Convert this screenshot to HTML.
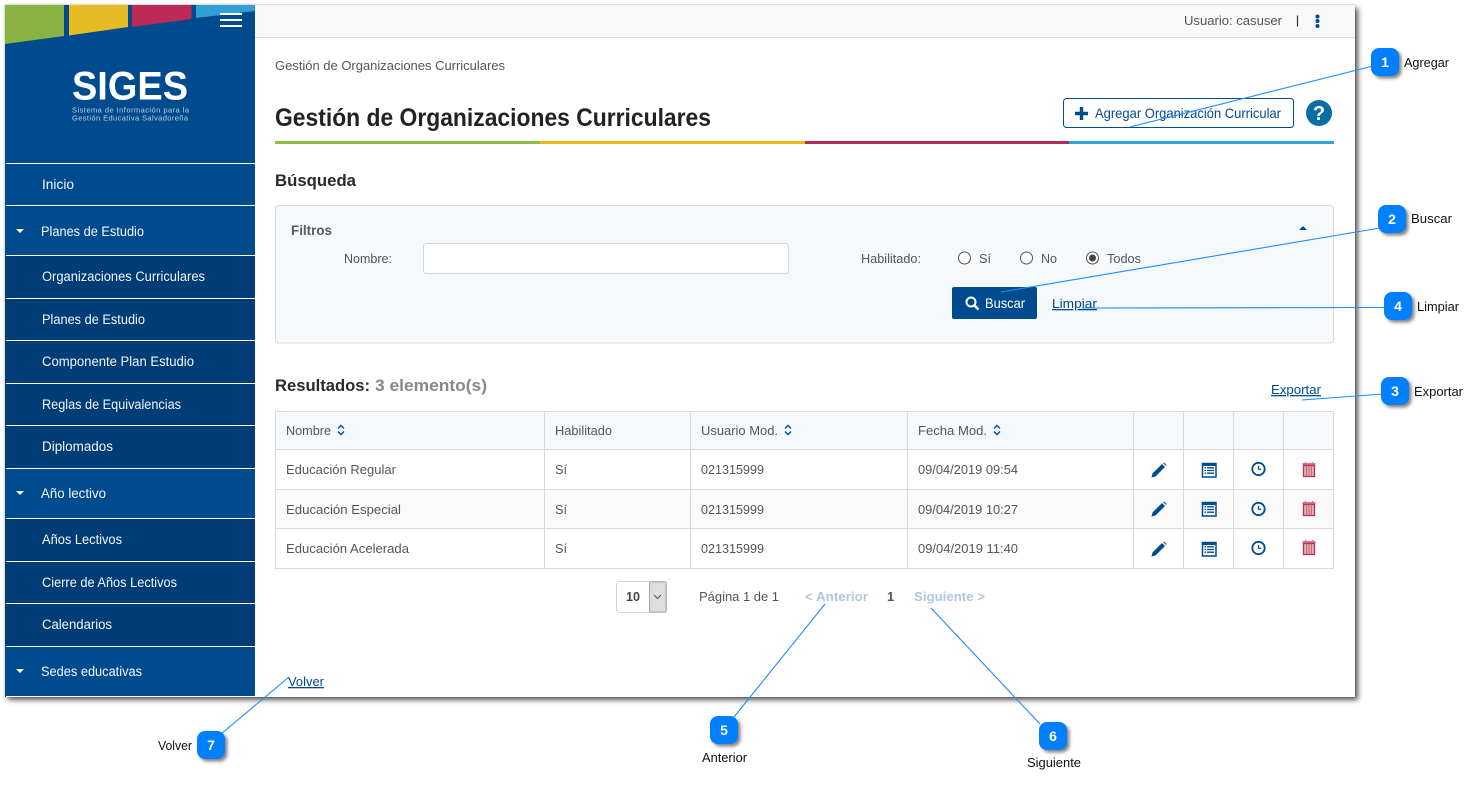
<!DOCTYPE html>
<html lang="es"><head><meta charset="utf-8"><title>SIGES</title>
<style>
html,body{margin:0;padding:0;background:#fff;width:1479px;height:786px;overflow:hidden}
#f{position:absolute;left:5px;top:5px;width:1350px;height:692px;background:#fff;box-shadow:3px 3px 5px rgba(0,0,0,.65),0 0 2px rgba(0,0,0,.25)}
svg{position:absolute;left:0;top:0}
text{font-family:"Liberation Sans",sans-serif;font-size:13px;fill:#555}
.m{font-size:13.5px;fill:#f2f6fa}
.b{font-weight:bold}
.l{fill:#004b8d}
.k{fill:#111;font-size:13px}
.n{font-weight:bold;fill:#fff;font-size:14px;text-anchor:middle}
.p{font-weight:bold;fill:#afc6e0}
</style></head><body><div id="f"></div>
<svg width="1479" height="786" viewBox="0 0 1479 786" xmlns="http://www.w3.org/2000/svg">
<defs>
<g id="ipen"><path d="M-7 7.500l1-4L3.500-6l3 3L-3 6.500z" fill="#004b8d"/><path d="M4.500-7l1-.5 2.500 2.500-.5 1z" fill="#004b8d"/></g>
<g id="ilist"><rect x="-6.500" y="-6.500" width="13.500" height="13.500" fill="#fff" stroke="#004b8d" stroke-width="1.500"/><rect x="-6" y="-6" width="12.500" height="2" fill="#004b8d"/><path d="M-4.500-2.200h1.500M-2-2.200h7M-4.500.500h1.500M-2 .500h7M-4.500 3.200h1.500M-2 3.200h7" stroke="#004b8d" stroke-width="1.300" fill="none"/></g>
<g id="iclock"><circle cx="0" cy="-.5" r="6.200" fill="none" stroke="#004b8d" stroke-width="1.800"/><path d="M0-3.500v3.300h2.800" stroke="#004b8d" stroke-width="1.200" fill="none"/></g>
<g id="itrash"><path d="M-6.500-6h13M-3.500-7v-.8M3.500-7v-.8" stroke="#c02a58" stroke-width="1.200" fill="none"/><rect x="-5.500" y="-4.500" width="11" height="11" fill="#e0b4a8" stroke="#c02a58" stroke-width="1.300"/><path d="M-2.400-4.500v11M0-4.500v11M2.400-4.500v11" stroke="#c8607a" stroke-width="1"/></g>
<g id="isort"><path d="M-3-1.500L0-4.500l3 3M-3 1.500L0 4.500l3-3" fill="none" stroke="#004b8d" stroke-width="1.400"/></g>
<g id="icall"><rect x="-14" y="-14" width="28" height="28" rx="8" fill="#333" opacity=".6" transform="translate(2.500 2.500)" filter="url(#bl)"/><rect x="-14" y="-14" width="28" height="28" rx="8" fill="#007fff"/></g>
<filter id="bl" x="-30%" y="-30%" width="160%" height="160%"><feGaussianBlur stdDeviation="1.500"/></filter>
</defs>

<!-- sidebar -->
<rect x="5" y="5" width="250" height="692" fill="#004b8d"/>
<polygon points="5,5 64,5 64,36 5,44" fill="#8bb244"/>
<polygon points="69,5 128,5 128,27 69,35.500" fill="#e6bc25"/>
<polygon points="132,5 191.500,5 191.500,19 132,27" fill="#bd2a58"/>
<polygon points="196,5 255,5 255,11 196,18" fill="#309fd3"/>
<path d="M220 14h22M220 20h22M220 26h22" stroke="#fff" stroke-width="2"/>
<text x="72" y="99.500" textLength="116" lengthAdjust="spacingAndGlyphs" style="font-size:40px;font-weight:bold;fill:#fff">SIGES</text>
<text x="72" y="112.500" textLength="117" lengthAdjust="spacing" style="font-size:7.500px;fill:#bcd0e2">Sistema de Información para la</text>
<text x="72" y="120.500" textLength="116" lengthAdjust="spacing" style="font-size:7.500px;fill:#bcd0e2">Gestión Educativa Salvadoreña</text>

<rect x="5" y="256" width="250" height="212" fill="#003c75"/>
<rect x="5" y="519" width="250" height="127" fill="#003c75"/>
<path d="M6 163.500h249M6 205.500h249M6 255.500h249M6 298.500h249M6 340.500h249M6 383.500h249M6 425.500h249M6 468.500h249M6 518.500h249M6 561.500h249M6 603.500h249M6 646.500h249M6 696.500h249" stroke="#fff" stroke-width="1"/>
<path d="M16 229h8l-4 4zM16 491h8l-4 4zM16 669h8l-4 4z" fill="#fff"/>
<text class="m" x="42" y="189" textLength="32" lengthAdjust="spacingAndGlyphs">Inicio</text>
<text class="m" x="41" y="236" textLength="103" lengthAdjust="spacingAndGlyphs">Planes de Estudio</text>
<text class="m" x="42" y="281" textLength="163" lengthAdjust="spacingAndGlyphs">Organizaciones Curriculares</text>
<text class="m" x="42" y="324" textLength="103" lengthAdjust="spacingAndGlyphs">Planes de Estudio</text>
<text class="m" x="42" y="366" textLength="152" lengthAdjust="spacingAndGlyphs">Componente Plan Estudio</text>
<text class="m" x="42" y="409" textLength="139" lengthAdjust="spacingAndGlyphs">Reglas de Equivalencias</text>
<text class="m" x="42" y="451" textLength="71" lengthAdjust="spacingAndGlyphs">Diplomados</text>
<text class="m" x="41" y="498" textLength="65" lengthAdjust="spacingAndGlyphs">Año lectivo</text>
<text class="m" x="42" y="544" textLength="80" lengthAdjust="spacingAndGlyphs">Años Lectivos</text>
<text class="m" x="42" y="587" textLength="135" lengthAdjust="spacingAndGlyphs">Cierre de Años Lectivos</text>
<text class="m" x="42" y="629" textLength="70" lengthAdjust="spacingAndGlyphs">Calendarios</text>
<text class="m" x="41" y="676" textLength="101" lengthAdjust="spacingAndGlyphs">Sedes educativas</text>

<!-- top bar -->
<rect x="255" y="5" width="1100" height="32" fill="#f8f8f8"/>
<path d="M255 37.500h1100" stroke="#d9d9d9"/>
<text x="1184" y="25" textLength="98" lengthAdjust="spacingAndGlyphs">Usuario: casuser</text>
<path d="M1297.500 15.500v11" stroke="#333" stroke-width="1.200"/>
<circle cx="1317.500" cy="16.500" r="2" fill="#004b8d"/><circle cx="1317.500" cy="21" r="2" fill="#004b8d"/><circle cx="1317.500" cy="26" r="2" fill="#004b8d"/>

<!-- header -->
<text x="275" y="70" textLength="230" lengthAdjust="spacingAndGlyphs" fill="#666">Gestión de Organizaciones Curriculares</text>
<text x="275" y="126" textLength="436" lengthAdjust="spacingAndGlyphs" class="b" style="font-size:25px;fill:#222">Gestión de Organizaciones Curriculares</text>
<rect x="1063.500" y="98.500" width="230" height="29" rx="3" fill="#fff" stroke="#004b8d"/>
<path d="M1081.500 107v13M1075 113.500h13" stroke="#004b8d" stroke-width="3.400"/>
<text x="1095" y="118" textLength="186" lengthAdjust="spacingAndGlyphs" class="l" style="font-size:14px">Agregar Organización Curricular</text>
<circle cx="1319" cy="113" r="13" fill="#0a6ea6"/>
<text x="1319" y="120" text-anchor="middle" class="b" style="font-size:20px;fill:#fff">?</text>
<rect x="275" y="141" width="265" height="3" fill="#8bbd40"/>
<rect x="540" y="141" width="265" height="3" fill="#eeb915"/>
<rect x="805" y="141" width="264" height="3" fill="#b82a58"/>
<rect x="1069" y="141" width="265" height="3" fill="#2ea6dd"/>

<!-- search -->
<text x="275" y="186" textLength="81" lengthAdjust="spacingAndGlyphs" class="b" style="font-size:17px;fill:#2a2a2a">Búsqueda</text>
<rect x="275.500" y="205.500" width="1058" height="137.500" rx="3" fill="#f5f9fc" stroke="#d6dadc"/>
<text x="291" y="235" textLength="41" lengthAdjust="spacingAndGlyphs" class="b" style="font-size:14px;fill:#5a5a5a">Filtros</text>
<path d="M1299 230l4-4 4 4z" fill="#004b8d"/>
<text x="344" y="263" textLength="48" lengthAdjust="spacingAndGlyphs">Nombre:</text>
<rect x="423.500" y="243.500" width="365" height="30" rx="3" fill="#fff" stroke="#d3d6d9"/>
<text x="861" y="263" textLength="60" lengthAdjust="spacingAndGlyphs">Habilitado:</text>
<circle cx="964.500" cy="258" r="6" fill="#fff" stroke="#555"/>
<text x="979" y="263" textLength="12" lengthAdjust="spacingAndGlyphs">Sí</text>
<circle cx="1026.500" cy="258" r="6" fill="#fff" stroke="#555"/>
<text x="1041" y="263" textLength="16" lengthAdjust="spacingAndGlyphs">No</text>
<circle cx="1092.500" cy="258" r="6" fill="#fff" stroke="#555"/><circle cx="1092.500" cy="258" r="3.500" fill="#444"/>
<text x="1107" y="263" textLength="34" lengthAdjust="spacingAndGlyphs">Todos</text>
<rect x="952" y="287" width="85" height="32" rx="2" fill="#004b8d"/>
<circle cx="971" cy="302" r="4.500" fill="none" stroke="#fff" stroke-width="2"/><path d="M974.500 305.500l4 4" stroke="#fff" stroke-width="2.600"/>
<text x="985" y="308" textLength="40" lengthAdjust="spacingAndGlyphs" style="font-size:14px;fill:#fff">Buscar</text>
<text x="1052" y="308" textLength="45" lengthAdjust="spacingAndGlyphs" class="l" text-decoration="underline">Limpiar</text>

<!-- results -->
<text x="275" y="391" textLength="95" lengthAdjust="spacingAndGlyphs" class="b" style="font-size:17px;fill:#2a2a2a">Resultados:</text>
<text x="375" y="391" textLength="112" lengthAdjust="spacingAndGlyphs" class="b" style="font-size:17px;fill:#888">3 elemento(s)</text>
<text x="1271" y="394" textLength="50" lengthAdjust="spacingAndGlyphs" class="l" text-decoration="underline">Exportar</text>

<!-- table -->
<rect x="275.500" y="411.500" width="1058" height="38" fill="#f5f9fc"/>
<rect x="275.500" y="489.500" width="1058" height="39" fill="#fafafa"/>
<path d="M275.500 411.500h1058v157h-1058zM275.500 449.500h1058M275.500 489.500h1058M275.500 528.500h1058M544.500 411.500v157M690.500 411.500v157M907.500 411.500v157M1133.500 411.500v157M1183.500 411.500v157M1233.500 411.500v157M1283.500 411.500v157" fill="none" stroke="#d7d9da"/>
<text x="286" y="435" textLength="45" lengthAdjust="spacingAndGlyphs">Nombre</text><use href="#isort" x="341" y="430"/>
<text x="555" y="435" textLength="57" lengthAdjust="spacingAndGlyphs">Habilitado</text>
<text x="701" y="435" textLength="77" lengthAdjust="spacingAndGlyphs">Usuario Mod.</text><use href="#isort" x="788" y="430"/>
<text x="918" y="435" textLength="69" lengthAdjust="spacingAndGlyphs">Fecha Mod.</text><use href="#isort" x="997" y="430"/>

<text x="286" y="474" textLength="110" lengthAdjust="spacingAndGlyphs">Educación Regular</text>
<text x="555" y="474" textLength="12" lengthAdjust="spacingAndGlyphs">Sí</text>
<text x="701" y="474" textLength="63" lengthAdjust="spacingAndGlyphs">021315999</text>
<text x="918" y="474" textLength="100" lengthAdjust="spacingAndGlyphs">09/04/2019 09:54</text>
<text x="286" y="514" textLength="115" lengthAdjust="spacingAndGlyphs">Educación Especial</text>
<text x="555" y="514" textLength="12" lengthAdjust="spacingAndGlyphs">Sí</text>
<text x="701" y="514" textLength="63" lengthAdjust="spacingAndGlyphs">021315999</text>
<text x="918" y="514" textLength="100" lengthAdjust="spacingAndGlyphs">09/04/2019 10:27</text>
<text x="286" y="553" textLength="123" lengthAdjust="spacingAndGlyphs">Educación Acelerada</text>
<text x="555" y="553" textLength="12" lengthAdjust="spacingAndGlyphs">Sí</text>
<text x="701" y="553" textLength="63" lengthAdjust="spacingAndGlyphs">021315999</text>
<text x="918" y="553" textLength="100" lengthAdjust="spacingAndGlyphs">09/04/2019 11:40</text>

<use href="#ipen" x="1158.500" y="470"/><use href="#ilist" x="1209" y="470"/><use href="#iclock" x="1258.500" y="469.500"/><use href="#itrash" x="1309" y="470"/>
<use href="#ipen" x="1158.500" y="509"/><use href="#ilist" x="1209" y="509"/><use href="#iclock" x="1258.500" y="509.500"/><use href="#itrash" x="1309" y="509"/>
<use href="#ipen" x="1158.500" y="549"/><use href="#ilist" x="1209" y="549"/><use href="#iclock" x="1258.500" y="548.500"/><use href="#itrash" x="1309" y="548"/>

<!-- pagination -->
<rect x="616.500" y="581.500" width="50" height="31" rx="3" fill="#fff" stroke="#d3d3d3"/>
<rect x="649.500" y="582" width="16.500" height="30" fill="#dedede" stroke="#aaa"/>
<path d="M654 595l3.500 3.500 3.500-3.500" fill="none" stroke="#555"/>
<text x="626" y="601" textLength="14" lengthAdjust="spacingAndGlyphs" class="b" style="fill:#444">10</text>
<text x="699" y="601" textLength="80" lengthAdjust="spacingAndGlyphs">Página 1 de 1</text>
<text x="805" y="601" textLength="63" lengthAdjust="spacingAndGlyphs" class="p">&lt; Anterior</text>
<text x="887" y="601" class="b" style="fill:#555">1</text>
<text x="914" y="601" textLength="71" lengthAdjust="spacingAndGlyphs" class="p">Siguiente &gt;</text>
<text x="288" y="686" textLength="36" lengthAdjust="spacingAndGlyphs" class="l" text-decoration="underline">Volver</text>

<!-- callout lines -->
<g stroke="#1e8cff" stroke-width="1.100" fill="none">
<path d="M1373 66L1130 127"/><path d="M1380 228L1001 292"/><path d="M1386 307.500L1082 308"/><path d="M1383 394L1302 400"/><path d="M825 604L734 717"/><path d="M931 608L1040 724"/><path d="M289 677L221 734"/>
</g>
<use href="#icall" x="1385" y="62"/><text class="n" x="1385" y="67">1</text>
<use href="#icall" x="1392" y="219"/><text class="n" x="1392" y="224">2</text>
<use href="#icall" x="1395" y="391"/><text class="n" x="1395" y="396">3</text>
<use href="#icall" x="1398" y="306"/><text class="n" x="1398" y="311">4</text>
<use href="#icall" x="724" y="730"/><text class="n" x="724" y="735">5</text>
<use href="#icall" x="1053" y="736"/><text class="n" x="1053" y="741">6</text>
<use href="#icall" x="211" y="745"/><text class="n" x="211" y="750">7</text>
<text class="k" x="1404" y="67" textLength="45" lengthAdjust="spacingAndGlyphs">Agregar</text>
<text class="k" x="1411" y="223" textLength="41" lengthAdjust="spacingAndGlyphs">Buscar</text>
<text class="k" x="1417" y="311" textLength="42" lengthAdjust="spacingAndGlyphs">Limpiar</text>
<text class="k" x="1414" y="396" textLength="49" lengthAdjust="spacingAndGlyphs">Exportar</text>
<text class="k" x="702" y="762" textLength="45" lengthAdjust="spacingAndGlyphs">Anterior</text>
<text class="k" x="1027" y="767" textLength="54" lengthAdjust="spacingAndGlyphs">Siguiente</text>
<text class="k" x="158" y="750" textLength="34" lengthAdjust="spacingAndGlyphs">Volver</text>
</svg>
</body></html>
